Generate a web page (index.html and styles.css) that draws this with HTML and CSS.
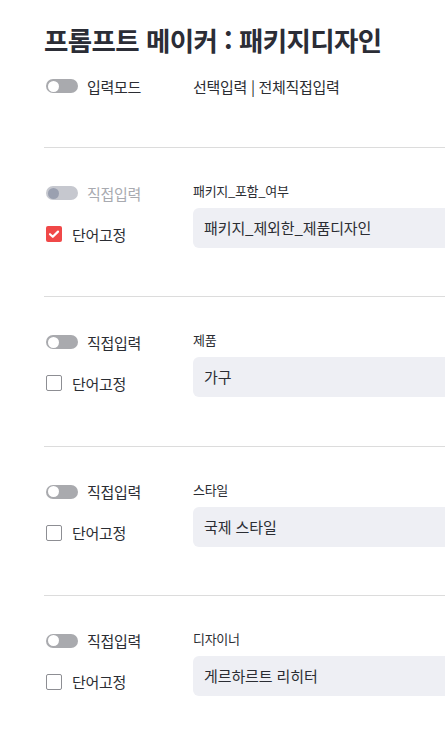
FILE: index.html
```html
<!DOCTYPE html>
<html lang="ko">
<head>
<meta charset="utf-8">
<link rel="stylesheet" href="styles.css">
</head>
<body>
<div class="page">
  <h1 class="title">프롬프트 메이커 : 패키지디자인</h1>
  <div class="mode-row">
    <div class="left-item"><span class="toggle"><span class="knob"></span></span><span class="txt">입력모드</span></div>
    <div class="mode-value">선택입력 | 전체직접입력</div>
  </div>

  <section class="field">
    <div class="controls">
      <div class="ctl disabled"><span class="toggle"><span class="knob"></span></span><span class="txt">직접입력</span></div>
      <div class="ctl"><span class="check on"><svg viewBox="0 0 16 16" width="16" height="16"><path d="M4 8.2l2.8 2.6L12 5.6" fill="none" stroke="#fff" stroke-width="2.2" stroke-linecap="round" stroke-linejoin="round"/></svg></span><span class="txt">단어고정</span></div>
    </div>
    <div class="entry">
      <div class="label">패키지_포함_여부</div>
      <div class="input">패키지_제외한_제품디자인</div>
    </div>
  </section>

  <section class="field">
    <div class="controls">
      <div class="ctl"><span class="toggle"><span class="knob"></span></span><span class="txt">직접입력</span></div>
      <div class="ctl"><span class="check"></span><span class="txt">단어고정</span></div>
    </div>
    <div class="entry">
      <div class="label">제품</div>
      <div class="input">가구</div>
    </div>
  </section>

  <section class="field">
    <div class="controls">
      <div class="ctl"><span class="toggle"><span class="knob"></span></span><span class="txt">직접입력</span></div>
      <div class="ctl"><span class="check"></span><span class="txt">단어고정</span></div>
    </div>
    <div class="entry">
      <div class="label">스타일</div>
      <div class="input">국제 스타일</div>
    </div>
  </section>

  <section class="field">
    <div class="controls">
      <div class="ctl"><span class="toggle"><span class="knob"></span></span><span class="txt">직접입력</span></div>
      <div class="ctl"><span class="check"></span><span class="txt">단어고정</span></div>
    </div>
    <div class="entry">
      <div class="label">디자이너</div>
      <div class="input">게르하르트 리히터</div>
    </div>
  </section>
</div>
</body>
</html>
```

FILE: styles.css
```css
html, body {
  margin: 0;
  padding: 0;
  background: #ffffff;
  overflow: hidden;
}
body {
  font-family: "Noto Sans CJK KR", "Noto Sans", sans-serif;
  color: #2b2d33;
}
.page {
  width: 445px;
  box-sizing: border-box;
  padding-left: 44px;
}
.title {
  margin: 0;
  padding-top: 22px;
  font-size: 26.5px;
  line-height: 36px;
  font-weight: 700;
  letter-spacing: -0.6px;
  white-space: nowrap;
  color: #2b2d36;
}
.mode-row {
  display: flex;
  margin-top: 17px;
  height: 22px;
  align-items: center;
  margin-bottom: 50px;
}
.left-item, .ctl {
  display: flex;
  align-items: center;
  height: 22px;
}
.left-item { width: 149px; flex: none; }
.txt {
  font-size: 15px;
  letter-spacing: -0.3px;
  color: #2b2d33;
}
.mode-value {
  font-size: 15px;
  letter-spacing: -0.3px;
  color: #2b2d33;
  white-space: nowrap;
}
.toggle {
  position: relative;
  display: inline-block;
  width: 32px;
  height: 14px;
  border-radius: 7px;
  background: #a9aaae;
  margin-left: 2px;
  margin-right: 9px;
}
.knob {
  position: absolute;
  left: 2px;
  top: 1.5px;
  width: 11px;
  height: 11px;
  border-radius: 50%;
  background: #ffffff;
}
.disabled .toggle { background: #c6c8cf; }
.disabled .knob { background: #9aa0b0; }
.disabled .txt { color: #a8aab0; }
.field {
  display: flex;
  border-top: 1px solid #dcdcdc;
  padding-top: 34px;
  height: 114.33px;
}
.controls {
  width: 149px;
  flex: none;
  display: flex;
  flex-direction: column;
  gap: 19px;
}
.check {
  display: inline-block;
  box-sizing: border-box;
  width: 16px;
  height: 16px;
  border: 1px solid #8d8e93;
  border-radius: 2px;
  margin-left: 2px;
  margin-right: 10px;
  background: #fff;
}
.check.on {
  border: none;
  background: #f04848;
}
.check svg { display: block; }
.entry {
  flex: 1;
  min-width: 0;
  display: flex;
  flex-direction: column;
}
.label {
  font-size: 13px;
  line-height: 18px;
  letter-spacing: -0.3px;
  color: #2b2d33;
  margin-bottom: 8px;
}
.input {
  height: 40px;
  line-height: 40px;
  background: #eeeff4;
  border-radius: 6px 0 0 6px;
  padding-left: 11px;
  font-size: 15px;
  letter-spacing: -0.1px;
  color: #2b2d33;
  white-space: nowrap;
}
```
